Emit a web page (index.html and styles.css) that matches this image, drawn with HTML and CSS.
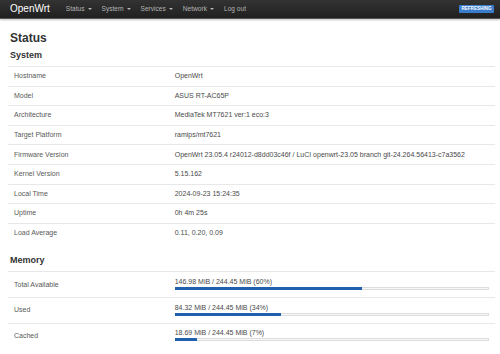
FILE: index.html
```html
<!DOCTYPE html>
<html>
<head>
<meta charset="utf-8">
<link rel="stylesheet" href="styles.css">
</head>
<body>
<header class="topbar">
  <div class="brand">OpenWrt</div>
  <nav class="menu">
    <span class="menu-item">Status<i class="caret"></i></span>
    <span class="menu-item">System<i class="caret"></i></span>
    <span class="menu-item">Services<i class="caret"></i></span>
    <span class="menu-item">Network<i class="caret"></i></span>
    <span class="menu-item">Log out</span>
  </nav>
  <span class="badge">REFRESHING</span>
</header>
<main class="content">
  <h2 class="page-title">Status</h2>
  <h3 class="section-title">System</h3>
  <div class="table">
    <div class="row"><div class="label">Hostname</div><div class="value">OpenWrt</div></div>
    <div class="row"><div class="label">Model</div><div class="value">ASUS RT-AC65P</div></div>
    <div class="row"><div class="label">Architecture</div><div class="value">MediaTek MT7621 ver:1 eco:3</div></div>
    <div class="row"><div class="label">Target Platform</div><div class="value">ramips/mt7621</div></div>
    <div class="row"><div class="label">Firmware Version</div><div class="value">OpenWrt 23.05.4 r24012-d8dd03c46f / LuCI openwrt-23.05 branch git-24.264.56413-c7a3562</div></div>
    <div class="row"><div class="label">Kernel Version</div><div class="value">5.15.162</div></div>
    <div class="row"><div class="label">Local Time</div><div class="value">2024-09-23 15:24:35</div></div>
    <div class="row"><div class="label">Uptime</div><div class="value">0h 4m 25s</div></div>
    <div class="row"><div class="label">Load Average</div><div class="value">0.11, 0.20, 0.09</div></div>
  </div>
  <h3 class="section-title memory-title">Memory</h3>
  <div class="table">
    <div class="row mem-row"><div class="label">Total Available</div><div class="value"><div class="bar-text">146.98 MiB / 244.45 MiB (60%)</div><div class="bar"><div class="fill" style="width:60%"></div></div></div></div>
    <div class="row mem-row"><div class="label">Used</div><div class="value"><div class="bar-text">84.32 MiB / 244.45 MiB (34%)</div><div class="bar"><div class="fill" style="width:34%"></div></div></div></div>
    <div class="row mem-row"><div class="label">Cached</div><div class="value"><div class="bar-text">18.69 MiB / 244.45 MiB (7%)</div><div class="bar"><div class="fill" style="width:7%"></div></div></div></div>
  </div>
</main>
</body>
</html>
```
FILE: styles.css
```css
html, body {
  margin: 0;
  padding: 0;
  background: #fff;
  font-family: "Liberation Sans", Arial, sans-serif;
  color: #404040;
}

.topbar {
  height: 18px;
  display: flex;
  align-items: center;
  padding: 0 6px 0 10px;
  background: linear-gradient(#333, #202020);
  border-bottom: 1px solid #555;
  box-shadow: 0 1px 2px rgba(0,0,0,0.25);
}

.brand {
  color: #fff;
  font-size: 10px;
  line-height: 18px;
  margin-right: 16px;
}

.menu {
  display: flex;
  gap: 10px;
  flex: 1;
}

.menu-item {
  color: #b5b5b5;
  font-size: 6.6px;
  line-height: 18px;
  display: inline-flex;
  align-items: center;
}

.caret {
  display: inline-block;
  width: 0;
  height: 0;
  margin-left: 3px;
  border-left: 2px solid transparent;
  border-right: 2px solid transparent;
  border-top: 2px solid #b5b5b5;
}

.badge {
  background: #3a7ccc;
  color: #fff;
  font-size: 4.6px;
  font-weight: bold;
  line-height: 8px;
  padding: 0 2.5px;
  border-radius: 1px;
}

.content {
  padding: 0 5px 0 8px;
}

.page-title {
  margin: 11.5px 0 0 2px;
  font-size: 12px;
  line-height: 14px;
  font-weight: bold;
  color: #333;
}

.section-title {
  margin: 5.5px 0 5px 2px;
  font-size: 9px;
  line-height: 11px;
  font-weight: bold;
  color: #333;
}

.memory-title {
  margin-top: 13px;
}

.table {
  display: flex;
  flex-direction: column;
}

.row {
  display: grid;
  grid-template-columns: 33% 1fr;
  border-top: 1px solid #e8e8e8;
  font-size: 7px;
  line-height: 10px;
}

.label, .value {
  padding: 4.3px 6px;
}

.label {
  color: #595959;
}

.value {
  color: #4a4a4a;
}

.mem-row {
  align-items: center;
}

.mem-row .value {
  padding: 4.7px 6px 7px;
}

.bar {
  height: 3px;
  box-sizing: border-box;
  border: 1px solid #ddd;
  background: #f7f7f7;
  position: relative;
}

.fill {
  position: absolute;
  left: -1px;
  top: -1px;
  bottom: -1px;
  background: #1f5fae;
}
```
